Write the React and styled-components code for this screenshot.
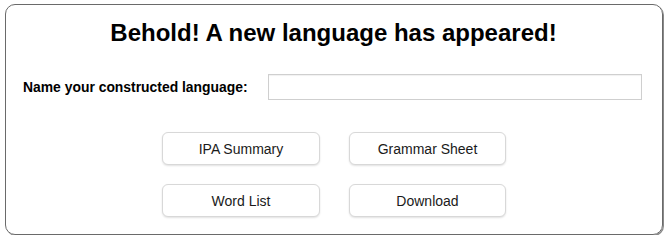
import React from 'react';
import styled, { createGlobalStyle } from 'styled-components';

const GlobalStyle = createGlobalStyle`
    body {
        margin: 0;
        background: #ffffff;
        font-family: "Liberation Sans", Arial, Helvetica, sans-serif;
    }
`;

const Card = styled.div`
    box-sizing: border-box;
    margin: 4px 0 0 5px;
    width: 658px;
    height: 231px;
    border: 1px solid #6a6a6a;
    border-radius: 10px;
    box-shadow: 1px 1px 0 #8a8a8a;
    padding: 0 20px 0 17px;
    display: flex;
    flex-direction: column;
`;

const Title = styled.h1`
    margin: 13px 0 0 2px;
    text-align: center;
    font-size: 24px;
    font-weight: bold;
    color: #000;
    line-height: 30px;
`;

const NameRow = styled.div`
    display: flex;
    align-items: center;
    margin-top: 26px;
`;

const Label = styled.label`
    font-size: 13.9px;
    font-weight: bold;
    color: #000;
    white-space: nowrap;
`;

const NameInput = styled.input`
    flex: 1;
    margin-left: 20px;
    height: 26px;
    box-sizing: border-box;
    border: 1px solid #cfcfcf;
    box-shadow: inset 0 1px 1px rgba(0, 0, 0, 0.06);
    background: #fff;
    outline: none;
`;

const ButtonGrid = styled.div`
    display: grid;
    grid-template-columns: 158px 157px;
    column-gap: 29px;
    row-gap: 19px;
    justify-content: center;
    margin: 32px 0 0 3px;
`;

const ActionButton = styled.button`
    height: 33px;
    border: 1px solid #d8d8d8;
    border-radius: 6px;
    background: #fff;
    box-shadow: 0 1px 2px rgba(0, 0, 0, 0.12);
    font-family: "Liberation Sans", Arial, Helvetica, sans-serif;
    font-size: 14px;
    color: #1a1a1a;
    cursor: pointer;
`;

const buttons = ['IPA Summary', 'Grammar Sheet', 'Word List', 'Download'];

export default function App() {
    return (
        <>
            <GlobalStyle />
            <Card>
                <Title>Behold! A new language has appeared!</Title>
                <NameRow>
                    <Label htmlFor="conlang-name">Name your constructed language:</Label>
                    <NameInput id="conlang-name" type="text" />
                </NameRow>
                <ButtonGrid>
                    {buttons.map(label => (
                        <ActionButton key={label}>{label}</ActionButton>
                    ))}
                </ButtonGrid>
            </Card>
        </>
    );
}
